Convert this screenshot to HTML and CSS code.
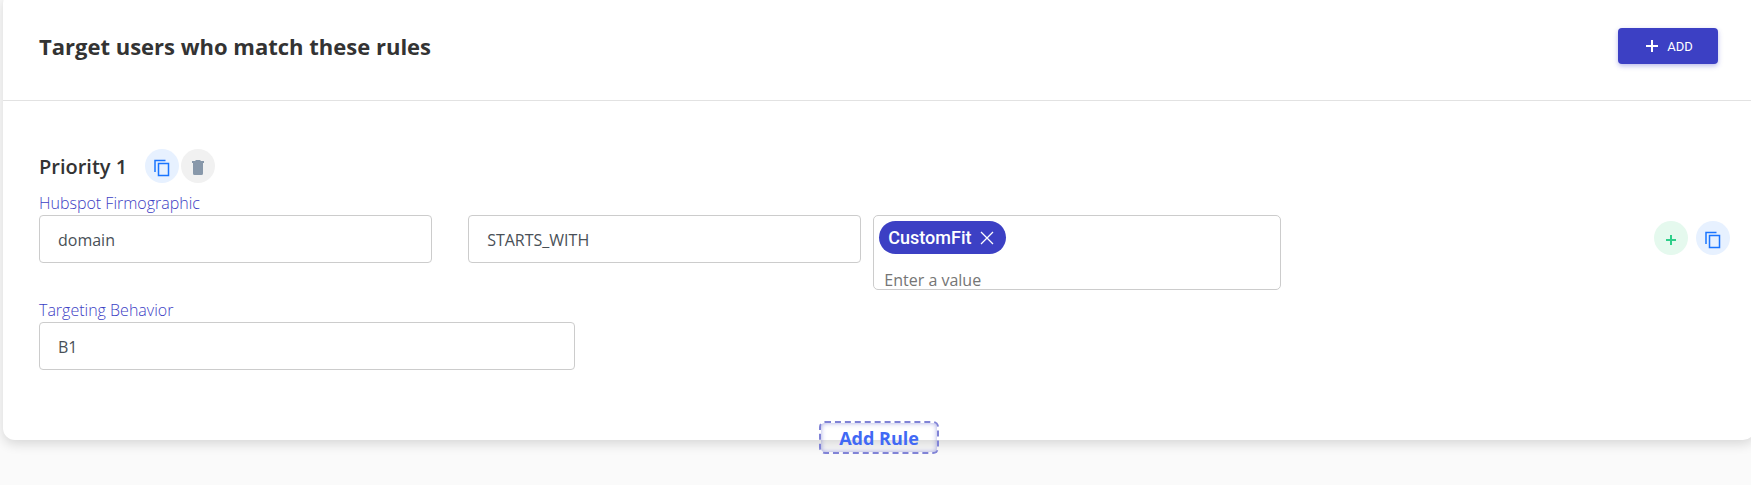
FILE: index.html
```
<!DOCTYPE html>
<html lang="en">
  <head>
    <meta charset="UTF-8" />
    <meta name="viewport" content="width=device-width, initial-scale=1.0" />
    <title>Targeting rules</title>
    <link rel="stylesheet" href="styles.css">
  </head>
  <body>
    <svg width="0" height="0" class="sprite" aria-hidden="true">
      <symbol id="icon-copy" viewBox="0 0 16 18">
        <path d="M1 13V1.500H11.500" fill="none" stroke="currentColor" stroke-width="1.500" />
        <rect x="4.500" y="4.500" width="10" height="12" fill="none" stroke="currentColor" stroke-width="1.500" />
      </symbol>
    </svg>
    <main class="card">
      <header class="card-header">
        <h1>Target users who match these rules</h1>
        <button class="add-button" type="button">
          <svg width="14" height="14" viewBox="0 0 14 14"><path d="M7 1v12M1 7h12" stroke="currentColor" stroke-width="2" /></svg>
          ADD
        </button>
      </header>

      <form class="rules">
        <div class="priority">
          <h2>Priority 1</h2>
          <button class="round blue" type="button" title="Copy rule">
            <svg width="16" height="18"><use href="#icon-copy" /></svg>
          </button>
          <button class="round gray" type="button" title="Delete rule">
            <svg width="12" height="15" viewBox="0 0 12 15"><path d="M4 0h4l1 1h3v2H0V1h3zM1 3h10v10.500q0 1.500-1.500 1.500h-7Q1 15 1 13.500z" fill="currentColor" /></svg>
          </button>
        </div>

        <label class="field-label" for="attribute">Hubspot Firmographic</label>
        <div class="condition">
          <input class="field attribute" id="attribute" type="text" value="domain" />
          <input class="field operator" type="text" value="STARTS_WITH" aria-label="Operator" />
          <div class="values">
            <span class="chip">
              CustomFit
              <button type="button" title="Remove">
                <svg width="14" height="14" viewBox="0 0 14 14"><path d="M1 1l12 12M13 1L1 13" stroke="currentColor" stroke-width="1.300" /></svg>
              </button>
            </span>
            <input type="text" placeholder="Enter a value" aria-label="Value" />
          </div>
          <div class="actions">
            <button class="round green" type="button" title="Add condition">
              <svg width="12" height="12" viewBox="0 0 12 12"><path d="M6 1v10M1 6h10" stroke="currentColor" stroke-width="2" /></svg>
            </button>
            <button class="round blue" type="button" title="Copy condition">
              <svg width="16" height="18"><use href="#icon-copy" /></svg>
            </button>
          </div>
        </div>

        <label class="field-label" for="behavior">Targeting Behavior</label>
        <input class="field behavior" id="behavior" type="text" value="B1" />
      </form>

      <button class="add-rule" type="button">Add Rule</button>
    </main>
  </body>
</html>
```

FILE: styles.css
```
* {
  box-sizing: border-box;
}

body {
  margin: 0;
  overflow: hidden;
  background: #fafafa;
  color: #333;
  font-family: "Segoe UI", "Open Sans", sans-serif;
  font-size: 16px;
}

h1,
h2 {
  margin: 0;
}

button,
input {
  font: inherit;
}

button {
  border: none;
  padding: 0;
  cursor: pointer;
}

svg {
  display: block;
}

.sprite {
  position: absolute;
}

.card {
  position: relative;
  margin: -8px -4px 48px 3px;
  padding-bottom: 70px;
  background: #fff;
  border-radius: 12px;
  box-shadow: 0 4px 12px rgba(0, 0, 0, 0.14);
}

.card-header {
  display: flex;
  align-items: center;
  justify-content: space-between;
  height: 109px;
  padding: 0 37px 0 36px;
  border-bottom: 1px solid #e2e2e2;
}

.card-header h1 {
  font-size: 22px;
  line-height: 32px;
}

.add-button {
  display: flex;
  align-items: center;
  justify-content: center;
  gap: 8px;
  width: 100px;
  height: 36px;
  padding-left: 2px;
  border-radius: 4px;
  background: #3c40c4;
  color: #fff;
  font-family: Roboto, sans-serif;
  font-size: 13px;
  box-shadow: 0 2px 5px rgba(60, 64, 196, 0.35);
}

.rules {
  padding: 48px 25px 0 36px;
}

.priority {
  display: flex;
  align-items: center;
  gap: 2px;
  height: 34px;
  margin-bottom: 8px;
}

.priority h2 {
  margin-right: 16px;
  font-size: 20px;
  font-weight: 600;
}

.round {
  display: flex;
  align-items: center;
  justify-content: center;
  width: 34px;
  height: 34px;
  padding-top: 3px;
  border-radius: 50%;
}

.blue {
  background: #e7f1ff;
  color: #1a75ff;
}

.gray {
  background: #f1f1f1;
  color: #8898aa;
}

.green {
  background: #e5f9ee;
  color: #2dce89;
}

.field-label {
  display: block;
  color: #3c40c4;
  font-weight: 300;
  line-height: 24px;
}

.field {
  height: 48px;
  padding: 2px 18px 0;
  border: 1px solid #ccc;
  border-radius: 4px;
  background: #fff;
  color: #495057;
}

.condition {
  display: flex;
  align-items: flex-start;
  margin-bottom: 8px;
}

.attribute,
.operator {
  width: 23.25%;
}

.operator {
  margin-left: 36px;
}

.values {
  width: 24.1%;
  height: 75px;
  margin-left: 12px;
  padding: 5px;
  border: 1px solid #ccc;
  border-radius: 5px;
  overflow: hidden;
}

.values input {
  display: block;
  width: 100%;
  height: 38px;
  padding: 14px 5px 0;
  border: none;
  background: none;
}

.values input::placeholder {
  color: #757575;
}

.chip {
  display: flex;
  align-items: center;
  gap: 8px;
  width: fit-content;
  height: 33px;
  padding: 0 12px 0 9px;
  border-radius: 17px;
  background: #3c40c4;
  color: #fff;
  font-family: Roboto, sans-serif;
  font-size: 18px;
  font-weight: 500;
}

.chip button {
  background: none;
  color: #fff;
}

.actions {
  display: flex;
  gap: 8px;
  margin: 6px 0 0 auto;
}

.behavior {
  display: block;
  width: 31.7%;
}

.add-rule {
  position: absolute;
  bottom: -14px;
  left: 50%;
  width: 120px;
  height: 33px;
  margin-left: -60px;
  border: 2px dashed #8083d6;
  border-radius: 6px;
  background: transparent;
  box-shadow: inset 0 0 5px rgba(60, 64, 196, 0.45);
  color: #4169f5;
  font-size: 18px;
  font-weight: 700;
  line-height: 24px;
}
```
